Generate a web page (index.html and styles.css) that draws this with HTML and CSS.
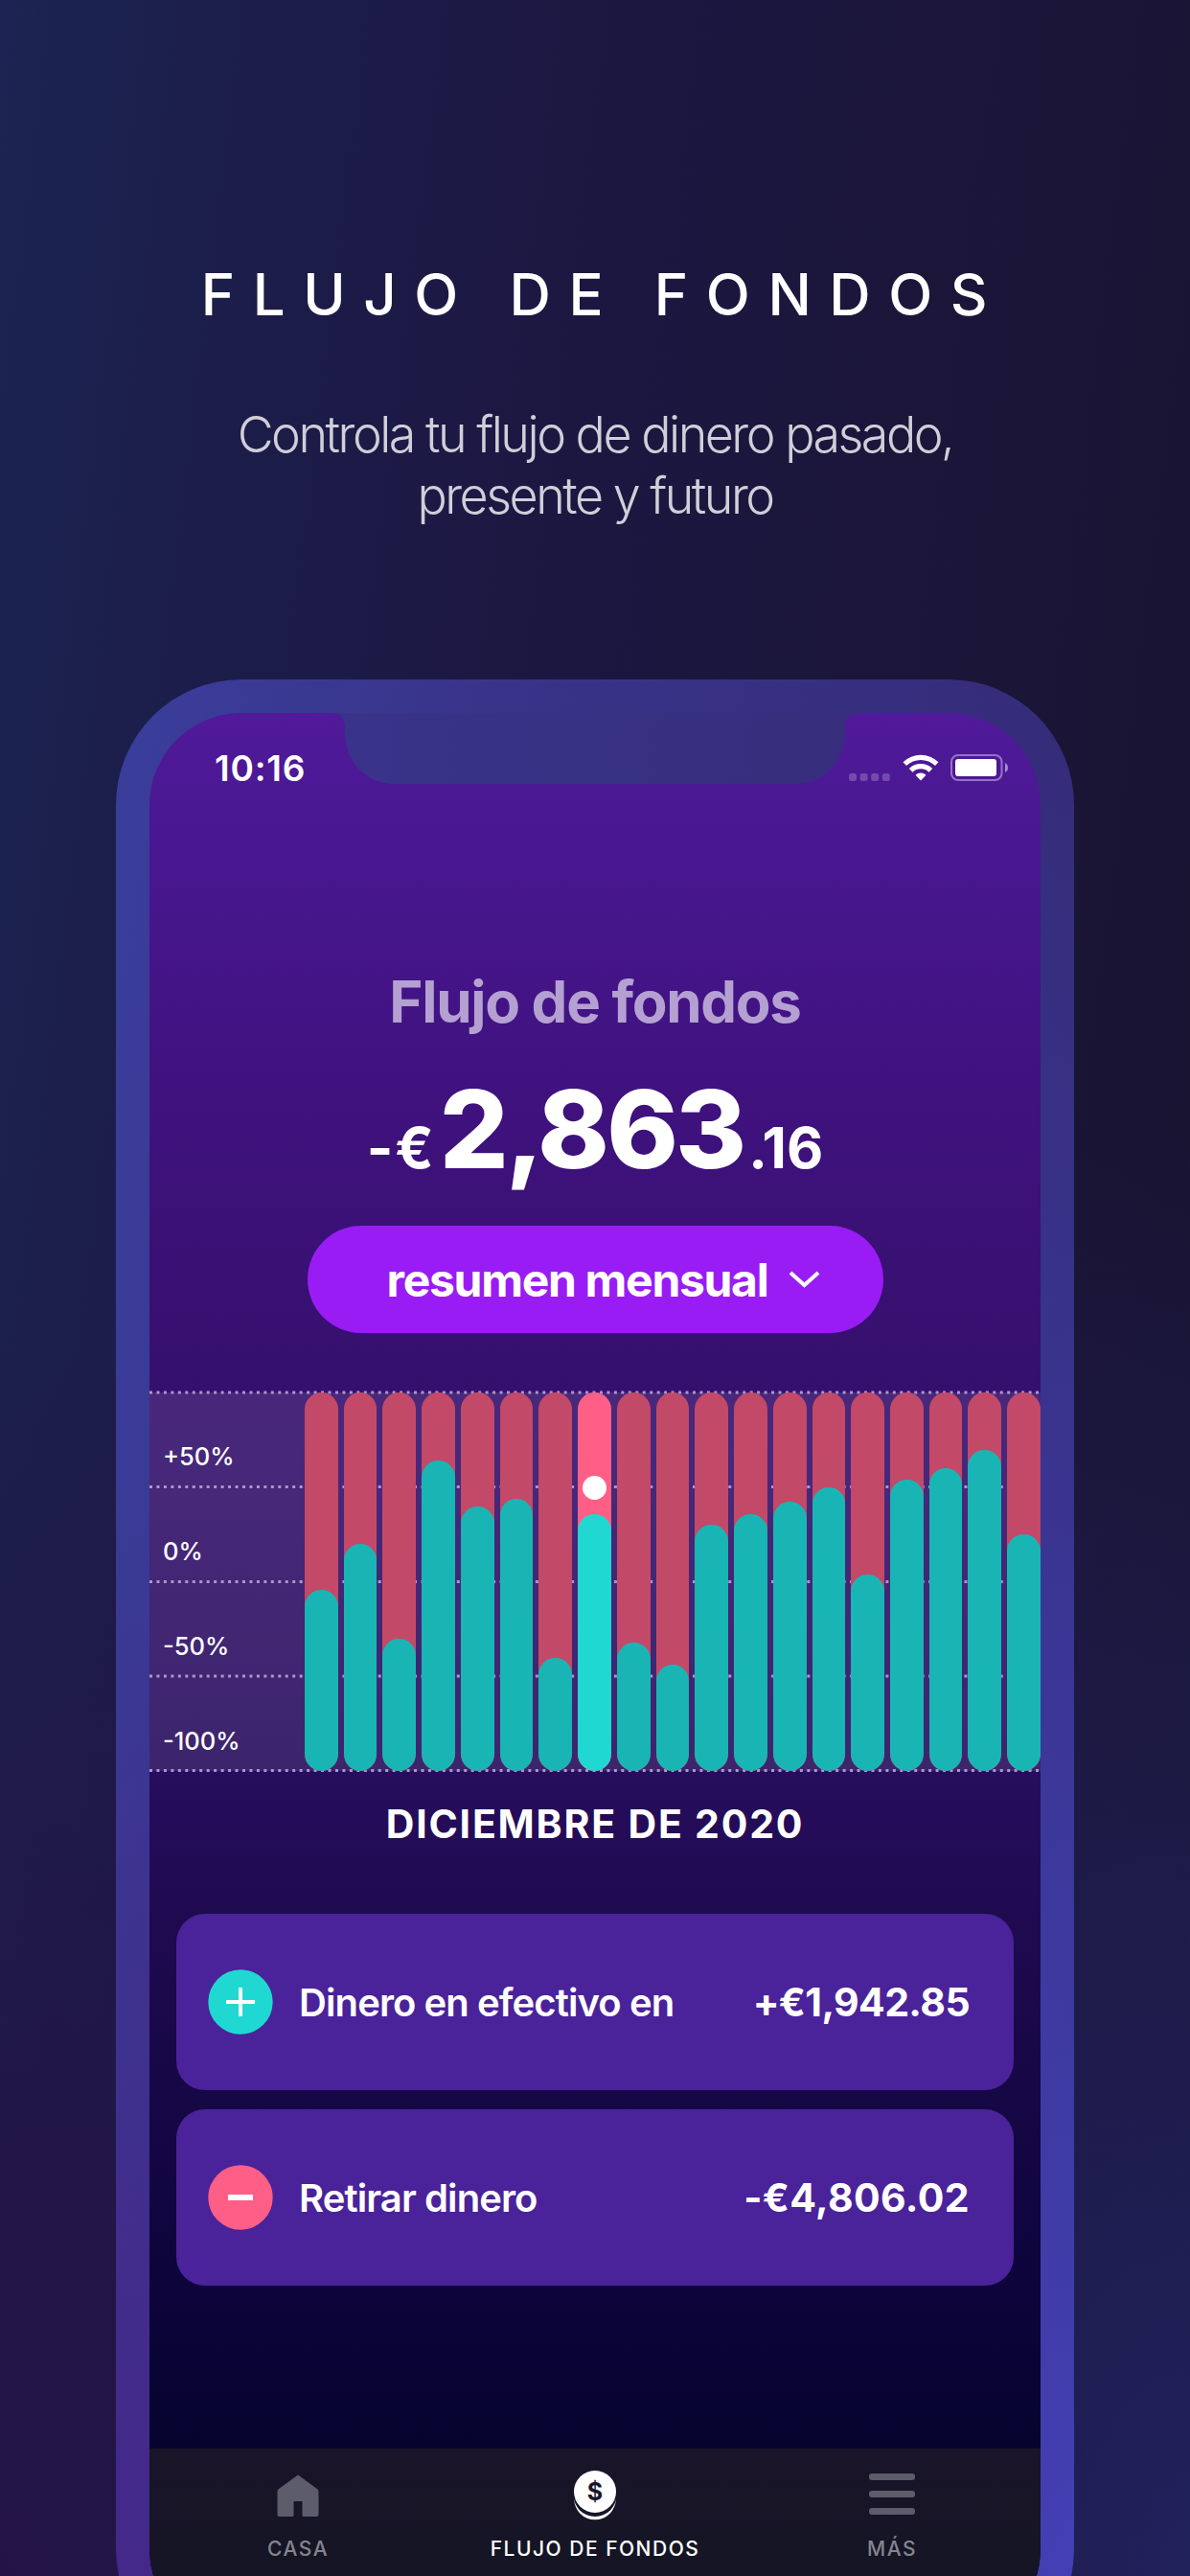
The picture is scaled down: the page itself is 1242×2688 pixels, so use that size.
FILE: index.html
```html
<!DOCTYPE html>
<html lang="es">
<head>
    <meta charset="UTF-8">
    <meta name="viewport" content="width=device-width, initial-scale=1.0">
    <title>Flujo de fondos</title>
    <link rel="stylesheet" href="styles.css">
</head>
<body>
    <header class="intro">
        <h1 class="intro-title">FLUJO DE FONDOS</h1>
        <p class="intro-text">Controla tu flujo de dinero pasado,<br>presente y futuro</p>
    </header>

    <div class="phone">
        <div class="screen">
            <svg class="notch" width="550" height="74" viewBox="0 0 550 74">
                <defs>
                    <linearGradient id="notchFill" x1="0" y1="0" x2="1" y2="0">
                        <stop offset="0" stop-color="#39348a"/>
                        <stop offset="1" stop-color="#362e7c"/>
                    </linearGradient>
                </defs>
                <path fill="url(#notchFill)" d="M0 0H550Q536 0 536 15V20C536 50 514 74 484 74H66C36 74 14 50 14 20V15Q14 0 0 0Z"/>
            </svg>

            <!-- Status bar -->
            <div class="status">
                <span class="clock">10:16</span>
                <div class="status-icons">
                    <svg width="43" height="8" viewBox="0 0 43 8" fill="#744aad">
                        <rect x="0" width="8" height="8" rx="2.5"/>
                        <rect x="11.6" width="8" height="8" rx="2.5"/>
                        <rect x="23.2" width="8" height="8" rx="2.5"/>
                        <rect x="34.8" width="8" height="8" rx="2.5"/>
                    </svg>
                    <svg class="wifi" width="38" height="28" viewBox="0 0 38 28" fill="#fff">
                        <path d="M0.5 8.2A26.5 26.5 0 0 1 37.5 8.2L34 12A21.5 21.5 0 0 0 4 12Z"/>
                        <path d="M6.8 14.9A17.6 17.6 0 0 1 31.2 14.9L27.6 18.7A12.5 12.5 0 0 0 10.4 18.7Z"/>
                        <path d="M13.5 21.7A8.2 8.2 0 0 1 24.5 21.7L19 27.6Z"/>
                    </svg>
                    <svg class="battery" width="60" height="28" viewBox="0 0 60 28">
                        <rect x="1" y="1" width="52.5" height="26" rx="7" fill="none" stroke="#9474c3" stroke-width="2"/>
                        <rect x="5" y="5" width="43" height="18" rx="3" fill="#fff"/>
                        <path d="M57 9C61 11 61 17 57 19Z" fill="#a68dcf"/>
                    </svg>
                </div>
            </div>

            <!-- Balance -->
            <div class="balance">
                <h2 class="balance-title">Flujo de fondos</h2>
                <div class="balance-amount"><span class="balance-sign">-€</span><span class="balance-main">2,863</span><span class="balance-cents">.16</span></div>
                <button class="period">
                    <span class="period-text">resumen mensual</span>
                    <svg width="33" height="20" viewBox="0 0 33 20"><path d="M2 3L16.5 16L31 3" fill="none" stroke="#fff" stroke-width="4"/></svg>
                </button>
            </div>

            <!-- Chart -->
            <div class="chart">
                <svg class="grid" width="930" height="398" viewBox="0 0 930 398">
                    <g stroke="#ab97cb" stroke-width="3" stroke-dasharray="3 4.46">
                        <path d="M0 2H930"/>
                        <path d="M0 100.5H930"/>
                        <path d="M0 199.5H930"/>
                        <path d="M0 298H930"/>
                        <path d="M0 396.5H930"/>
                    </g>
                </svg>
                <div class="labels">
                    <span>+50%</span>
                    <span>0%</span>
                    <span>-50%</span>
                    <span>-100%</span>
                </div>
                <div class="bars">
                    <div class="bar"><div class="bar-in" style="height: 47.9%"></div></div>
                    <div class="bar"><div class="bar-in" style="height: 59.9%"></div></div>
                    <div class="bar"><div class="bar-in" style="height: 34.9%"></div></div>
                    <div class="bar"><div class="bar-in" style="height: 82%"></div></div>
                    <div class="bar"><div class="bar-in" style="height: 70%"></div></div>
                    <div class="bar"><div class="bar-in" style="height: 71.9%"></div></div>
                    <div class="bar"><div class="bar-in" style="height: 29.9%"></div></div>
                    <div class="bar active"><div class="bar-in" style="height: 67.9%"></div><div class="marker"></div></div>
                    <div class="bar"><div class="bar-in" style="height: 33.9%"></div></div>
                    <div class="bar"><div class="bar-in" style="height: 28.1%"></div></div>
                    <div class="bar"><div class="bar-in" style="height: 65%"></div></div>
                    <div class="bar"><div class="bar-in" style="height: 67.9%"></div></div>
                    <div class="bar"><div class="bar-in" style="height: 71.1%"></div></div>
                    <div class="bar"><div class="bar-in" style="height: 75%"></div></div>
                    <div class="bar"><div class="bar-in" style="height: 51.9%"></div></div>
                    <div class="bar"><div class="bar-in" style="height: 77%"></div></div>
                    <div class="bar"><div class="bar-in" style="height: 80%"></div></div>
                    <div class="bar"><div class="bar-in" style="height: 84.9%"></div></div>
                    <div class="bar"><div class="bar-in" style="height: 62.5%"></div></div>
                </div>
            </div>

            <h3 class="month">DICIEMBRE DE 2020</h3>

            <!-- Totals -->
            <div class="cards">
                <div class="card">
                    <svg width="68" height="68" viewBox="0 0 68 68">
                        <circle cx="34" cy="34" r="33.7" fill="#20d8d2"/>
                        <path d="M19 34H49M34 19V49" stroke="#fff" stroke-width="4"/>
                    </svg>
                    <span class="card-name">Dinero en efectivo en</span>
                    <span class="card-amount income">+€1,942.85</span>
                </div>
                <div class="card">
                    <svg width="68" height="68" viewBox="0 0 68 68">
                        <circle cx="34" cy="34" r="33.7" fill="#ff5f87"/>
                        <path d="M21 34H47" stroke="#fff" stroke-width="6"/>
                    </svg>
                    <span class="card-name">Retirar dinero</span>
                    <span class="card-amount expense">-€4,806.02</span>
                </div>
            </div>

            <!-- Tabs -->
            <nav class="tabs">
                <div class="tab">
                    <svg width="48" height="54" viewBox="0 0 48 54" fill="#5d5c6a">
                        <path d="M24 4.5L44.5 19.5Q45.5 20.5 45.5 22V46Q45.5 48 43.5 48H30Q28.5 48 28.5 46.5V33Q28.5 32 27.5 32H20.5Q19.5 32 19.5 33V46.5Q19.5 48 18 48H4.5Q2.5 48 2.5 46V22Q2.5 20.5 3.5 19.5Z"/>
                    </svg>
                    <span>CASA</span>
                </div>
                <div class="tab current">
                    <svg width="48" height="54" viewBox="0 0 48 54">
                        <circle cx="24" cy="29.5" r="21.8" fill="#fff"/>
                        <circle cx="24" cy="25.5" r="22.5" fill="#171529"/>
                        <circle cx="24" cy="22" r="22" fill="#fff"/>
                        <text class="coin" x="24" y="30.5" text-anchor="middle" fill="#171529">$</text>
                    </svg>
                    <span>FLUJO DE FONDOS</span>
                </div>
                <div class="tab">
                    <svg width="48" height="54" viewBox="0 0 48 54" fill="#5d5c6a">
                        <rect y="3" width="48" height="7" rx="3"/>
                        <rect y="21" width="48" height="7" rx="3"/>
                        <rect y="39" width="48" height="7" rx="3"/>
                    </svg>
                    <span>MÁS</span>
                </div>
            </nav>
        </div>
    </div>
</body>
</html>
```

FILE: styles.css
```css
* {
    box-sizing: border-box;
}
body {
    margin: 0;
    width: 1242px;
    height: 2688px;
    overflow: hidden;
    color: #fff;
    font-family: Inter, sans-serif;
    background:
        radial-gradient(ellipse 750px 1300px at 0% 100%, #241446 0%, rgba(36, 20, 70, 0) 100%),
        radial-gradient(ellipse 800px 1500px at 100% 100%, #21215c 0%, rgba(33, 33, 92, 0) 100%),
        linear-gradient(97deg, #1b2452 0%, #1c1d4a 18%, #1c1741 42%, #1b1538 70%, #18132f 100%);
}
h1,
h2,
h3,
p {
    margin: 0;
}
svg {
    display: block;
    flex-shrink: 0;
}
.intro {
    height: 709px;
    padding-top: 271px;
    text-align: center;
    white-space: nowrap;
}
.intro-title {
    font-size: 60px;
    line-height: 72px;
    font-weight: 500;
    letter-spacing: 18.6px;
    padding-left: 17px;
}
.intro-text {
    margin-top: 79px;
    font-size: 52px;
    line-height: 64px;
    font-weight: 300;
    letter-spacing: -2.5px;
    color: #d0cfd9;
}
.phone {
    width: 1000px;
    height: 2082px;
    margin: 0 auto;
    padding: 35px;
    border-radius: 131px;
    background:
        radial-gradient(ellipse 600px 1200px at 0% 100%, #452789 0%, rgba(69, 39, 137, 0) 100%),
        radial-gradient(ellipse 900px 1900px at 100% 95%, #4240b4 0%, rgba(66, 64, 180, 0) 100%),
        linear-gradient(97deg, #3a3e9b 0%, #39348a 30%, #362e7e 65%, #332b73 100%);
}
.screen {
    position: relative;
    display: flex;
    flex-direction: column;
    height: 2012px;
    border-radius: 96px;
    overflow: hidden;
    background: linear-gradient(180deg, #501a9a 0, #481790 150px, #40127f 380px, #371070 650px, #270d5d 1110px, #1f0a50 1260px, #160745 1450px, #0c043a 1660px, #06042f 1800px);
}
.notch {
    position: absolute;
    top: 0;
    left: 190px;
}
.status {
    display: flex;
    justify-content: space-between;
    align-items: flex-start;
    height: 269px;
    padding: 35px 34px 0 68px;
}
.clock {
    font-size: 37px;
    line-height: 46px;
    font-weight: 600;
    letter-spacing: 0.8px;
}
.status-icons {
    display: flex;
    align-items: flex-end;
    margin-top: 8px;
}
.wifi {
    margin-left: 13px;
}
.battery {
    margin-left: 12px;
}
.balance {
    display: flex;
    flex-direction: column;
    align-items: center;
    height: 440px;
    white-space: nowrap;
}
.balance-title {
    margin-top: -4px;
    font-size: 60px;
    line-height: 72px;
    font-weight: 700;
    letter-spacing: -1.3px;
    color: #b5a0d2;
}
.balance-amount {
    display: flex;
    align-items: baseline;
    height: 127px;
    margin-top: 29px;
    line-height: 136px;
    font-weight: 700;
}
.balance-main {
    margin: 0 5px 0 4px;
    font-size: 113px;
    font-weight: 800;
    letter-spacing: -3px;
}
.balance-sign {
    font-size: 59px;
    letter-spacing: 2px;
}
.balance-cents {
    font-size: 59px;
}
.period {
    display: flex;
    align-items: center;
    justify-content: center;
    gap: 22px;
    width: 601px;
    height: 112px;
    margin-top: 42px;
    padding: 0 0 0 18px;
    border: 0;
    border-radius: 56px;
    background-color: #991cf5;
    color: #fff;
    font: 700 48px Inter, sans-serif;
    letter-spacing: -1.3px;
}
.chart {
    position: relative;
    display: flex;
    height: 395px;
    background-color: rgba(255, 255, 255, 0.1);
}
.grid {
    position: absolute;
    top: -2px;
    left: 0;
}
.labels {
    position: relative;
    width: 162px;
    padding: 62px 0 0 14px;
    font-size: 25.5px;
    font-weight: 500;
}
.labels span {
    display: block;
    height: 99px;
    line-height: 10px;
}
.bars {
    position: relative;
    display: flex;
    gap: 6px;
    width: 768px;
}
.bar {
    position: relative;
    display: flex;
    flex: 1;
    align-items: flex-end;
    border-radius: 18px;
    overflow: hidden;
    background-color: #c34968;
}
.bar-in {
    width: 100%;
    border-radius: 18px;
    background-color: #19b5b5;
}
.active {
    background-color: #ff5f87;
}
.active .bar-in {
    background-color: #20d8d2;
}
.marker {
    position: absolute;
    top: 87px;
    left: 5px;
    width: 25px;
    height: 25px;
    border-radius: 50%;
    background-color: #fff;
}
.month {
    height: 149px;
    padding-top: 30px;
    font-size: 41px;
    line-height: 50px;
    font-weight: 700;
    letter-spacing: 1.8px;
    text-align: center;
}
.cards {
    display: flex;
    flex-direction: column;
    gap: 20px;
    padding: 0 28px;
}
.card {
    display: flex;
    align-items: center;
    height: 184px;
    padding: 0 46px 0 33px;
    border-radius: 30px;
    background-color: #4a2299;
    white-space: nowrap;
}
.card-name {
    margin-left: 27px;
    font-size: 40px;
    font-weight: 600;
    letter-spacing: -0.9px;
}
.card-amount {
    margin-left: auto;
    font-size: 41px;
    font-weight: 700;
}
.income {
    letter-spacing: -0.6px;
}
.expense {
    letter-spacing: 0.4px;
}
.tabs {
    display: grid;
    grid-template-columns: repeat(3, 1fr);
    height: 201px;
    margin-top: auto;
    padding-top: 23px;
    background: linear-gradient(180deg, #1a1429 0, #151525 110px);
}
.tab {
    display: flex;
    flex-direction: column;
    align-items: center;
    gap: 13px;
    color: #85848e;
    font-size: 21px;
    line-height: 30px;
    font-weight: 500;
    letter-spacing: 1.5px;
}
.current {
    color: #fff;
}
.coin {
    font-size: 25px;
    font-weight: 700;
    letter-spacing: 0;
}
```
